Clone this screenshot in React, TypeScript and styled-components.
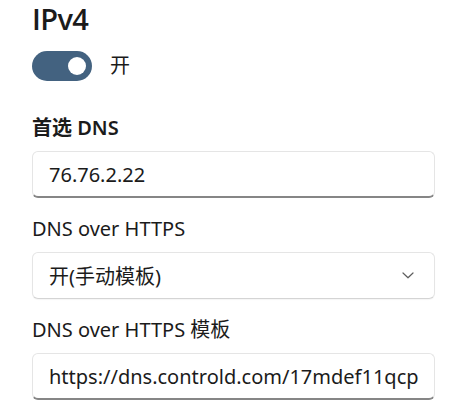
import React from "react";
import styled, { createGlobalStyle } from "styled-components";

const GlobalStyle = createGlobalStyle`
  html, body {
    margin: 0;
    padding: 0;
    background: #ffffff;
  }
  body {
    font-family: "Noto Sans", "Noto Sans CJK SC", sans-serif;
    color: #1b1b1b;
  }
`;

const Page = styled.div`
  display: flex;
  flex-direction: column;
  width: 403px;
  padding: 2px 0 0 32px;
`;

const Heading = styled.h1`
  margin: 0;
  font-family: "Open Sans", "Noto Sans", sans-serif;
  font-size: 29px;
  font-weight: 600;
  line-height: 34px;
  letter-spacing: -0.6px;
`;

const ToggleRow = styled.div`
  display: flex;
  align-items: center;
  gap: 18px;
  margin-top: 15px;
  height: 30px;
`;

const Track = styled.div<{ $on: boolean }>`
  position: relative;
  width: 60px;
  height: 30px;
  border-radius: 15px;
  background: ${p => (p.$on ? "#436280" : "transparent")};
  box-sizing: border-box;
`;

const Knob = styled.div<{ $on: boolean }>`
  position: absolute;
  top: 6px;
  left: ${p => (p.$on ? "36px" : "6px")};
  width: 18px;
  height: 18px;
  border-radius: 50%;
  background: #ffffff;
`;

const ToggleText = styled.span`
  font-size: 20px;
  line-height: 30px;
`;

const Field = styled.div<{ $first?: boolean }>`
  display: flex;
  flex-direction: column;
  margin-top: ${p => (p.$first ? "33px" : "17px")};
`;

const Label = styled.div<{ $strong?: boolean }>`
  font-size: 20px;
  font-weight: ${p => (p.$strong ? 600 : 400)};
  line-height: 28px;
  margin-bottom: 9px;
`;

const Box = styled.div`
  display: flex;
  align-items: center;
  box-sizing: border-box;
  height: 47px;
  padding: 0 16px;
  background: #ffffff;
  border: 1px solid #e5e5e5;
  border-bottom: 2px solid #868686;
  border-radius: 6px;
  font-size: 20px;
  color: #1b1b1b;
  white-space: nowrap;
  overflow: hidden;
`;

const Select = styled(Box)`
  justify-content: space-between;
  padding-right: 20px;
  border-bottom: 1px solid #d4d4d4;
  box-shadow: 0 1px 1px rgba(0, 0, 0, 0.04);
`;

const Chevron = () => (
  <svg width="12" height="7" viewBox="0 0 12 7" fill="none">
    <path d="M1 1 L6 5.8 L11 1" stroke="#5f5f5f" strokeWidth="1.2" strokeLinecap="round" strokeLinejoin="round" />
  </svg>
);

const App: React.FC = () => {
  return (
    <>
      <GlobalStyle />
      <Page>
        <Heading>IPv4</Heading>
        <ToggleRow>
          <Track $on>
            <Knob $on />
          </Track>
          <ToggleText>开</ToggleText>
        </ToggleRow>

        <Field $first>
          <Label $strong>首选 DNS</Label>
          <Box>76.76.2.22</Box>
        </Field>

        <Field>
          <Label>DNS over HTTPS</Label>
          <Select>
            开(手动模板)
            <Chevron />
          </Select>
        </Field>

        <Field>
          <Label>DNS over HTTPS 模板</Label>
          <Box>https://dns.controld.com/17mdef11qcp</Box>
        </Field>
      </Page>
    </>
  );
};

export default App;
